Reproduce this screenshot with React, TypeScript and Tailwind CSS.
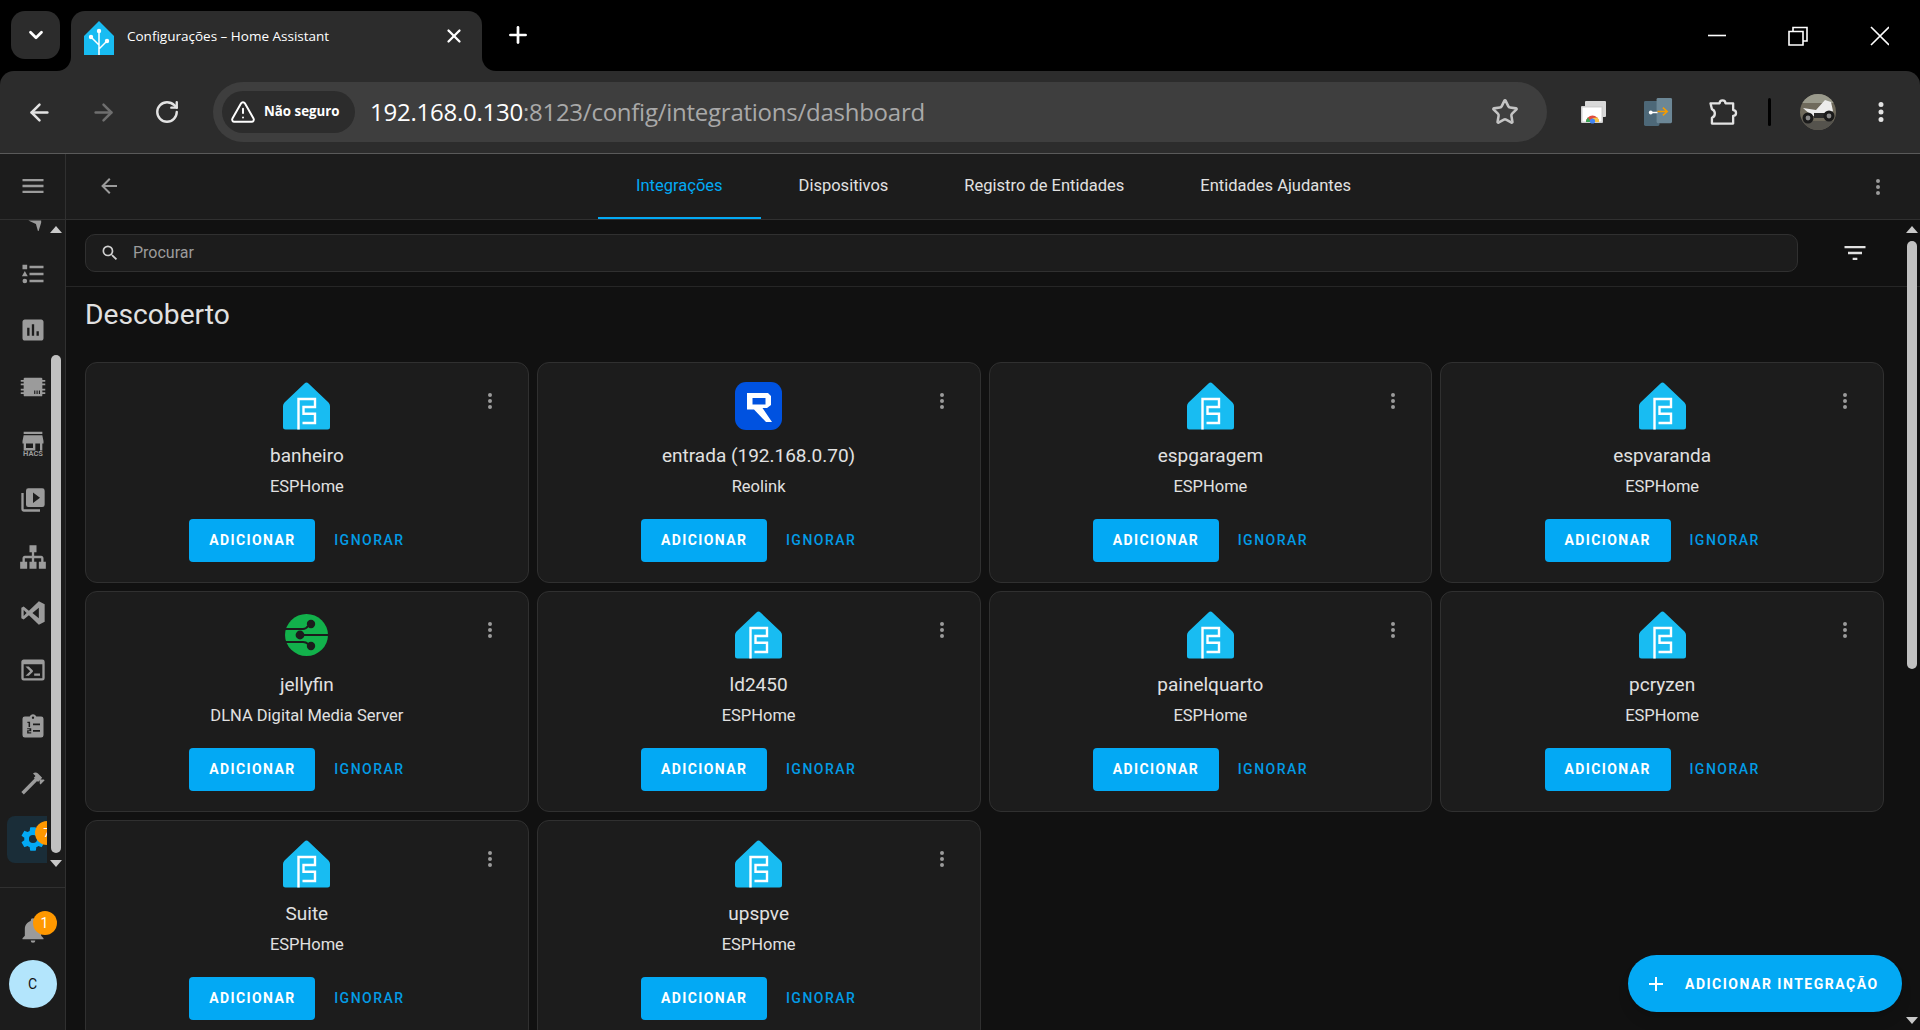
import { ArrowLeft, ArrowRight, RotateCw, Star, TriangleAlert, ChevronDown, X, Plus } from "lucide-react";

const mdi = {
  menu: "M3,6H21V8H3V6M3,11H21V13H3V11M3,16H21V18H3V16Z",
  dots: "M12,16A2,2 0 0,1 14,18A2,2 0 0,1 12,20A2,2 0 0,1 10,18A2,2 0 0,1 12,16M12,10A2,2 0 0,1 14,12A2,2 0 0,1 12,14A2,2 0 0,1 10,12A2,2 0 0,1 12,10M12,4A2,2 0 0,1 14,6A2,2 0 0,1 12,8A2,2 0 0,1 10,6A2,2 0 0,1 12,4Z",
  back: "M20,11V13H8L13.5,18.5L12.08,19.92L4.16,12L12.08,4.08L13.5,5.5L8,11H20Z",
  search:
    "M9.5,3A6.5,6.5 0 0,1 16,9.5C16,11.11 15.41,12.59 14.44,13.73L14.71,14H15.5L20.5,19L19,20.5L14,15.5V14.71L13.73,14.44C12.59,15.41 11.11,16 9.5,16A6.5,6.5 0 0,1 3,9.5A6.5,6.5 0 0,1 9.5,3M9.5,5C7,5 5,7 5,9.5C5,12 7,14 9.5,14C12,14 14,12 14,9.5C14,7 12,5 9.5,5Z",
  filter: "M6,13H18V11H6M3,6V8H21V6M10,18H14V16H10V18Z",
  plus: "M19,13H13V19H11V13H5V11H11V5H13V11H19V13Z",
  list: "M5,9.5L7.5,14H2.5L5,9.5M3,4H7V8H3V4M5,20A2,2 0 0,0 7,18A2,2 0 0,0 5,16A2,2 0 0,0 3,18A2,2 0 0,0 5,20M9,5V7H21V5H9M9,19H21V17H9V19M9,13H21V11H9V13Z",
  chart: "M9 17H7V10H9V17M13 17H11V7H13V17M17 17H15V13H17V17M19 3H5C3.9 3 3 3.9 3 5V19C3 20.1 3.9 21 5 21H19C20.1 21 21 20.1 21 19V5C21 3.9 20.1 3 19 3Z",
  chip: "M5 4H19A1 1 0 0 1 20 5V6H22.5V7.5H20V9H22.5V10.5H20V13.5H22.5V15H20V16.5H22.5V18H20V19A1 1 0 0 1 19 20H5A1 1 0 0 1 4 19V18H1.5V16.5H4V15H1.5V13.5H4V10.5H1.5V9H4V7.5H1.5V6H4V5A1 1 0 0 1 5 4M13 15V18H14V15H13M15 15V18H16V15H15M17 15V18H18V15H17Z",
  store: "M12,15.5H6V11.5H12M21,11.5V9.5L20,4.5H4L3,9.5V11.5H4V17.5H14V11.5H18V17.5H20V11.5M20,1.5H4V3.5H20V1.5Z",
  media: "M4 6H2V20A2 2 0 0 0 4 22H18V20H4V6M20 2H8A2 2 0 0 0 6 4V16A2 2 0 0 0 8 18H20A2 2 0 0 0 22 16V4A2 2 0 0 0 20 2M12 14.5V5.5L18 10L12 14.5Z",
  sitemap: "M9,2V8H11V11H5C3.89,11 3,11.89 3,13V16H1V22H7V16H5V13H11V16H9V22H15V16H13V13H19V16H17V22H23V16H21V13C21,11.89 20.11,11 19,11H13V8H15V2H9Z",
  vscode: "M17 2L22 4.5V19.5L17 22L8.5 14L4 17.5L2 16.5V7.5L4 6.5L8.5 10L17 2M17 7.5L11.5 12L17 16.5V7.5M4 9.5V14.5L6.5 12L4 9.5Z",
  console: "M20,19V7H4V19H20M20,3A2,2 0 0,1 22,5V19A2,2 0 0,1 20,21H4A2,2 0 0,1 2,19V5C2,3.89 2.9,3 4,3H20M13,17V15H18V17H13M9.58,13L5.57,9H8.4L11.7,12.3C12.09,12.69 12.09,13.33 11.7,13.72L8.42,17H5.59L9.58,13Z",
  clipboard:
    "M19,3H14.82C14.4,1.84 13.3,1 12,1C10.7,1 9.6,1.84 9.18,3H5A2,2 0 0,0 3,5V19A2,2 0 0,0 5,21H19A2,2 0 0,0 21,19V5A2,2 0 0,0 19,3M12,3A1,1 0 0,1 13,4A1,1 0 0,1 12,5A1,1 0 0,1 11,4A1,1 0 0,1 12,3M7.2 7.5V8.5H8.2V12H9.5V7.5H7.2M7 13V14H9V14.7H7V17.5H10.5V16.5H8.2V15.7H10.5V13H7M12 9V10.5H18V9H12M12 14.5V16H18V14.5H12Z",
  hammer: "M2 19.63L13.43 8.2L12.72 7.5L14.14 6.07L12 3.89C13.2 2.7 15.09 2.7 16.27 3.89L19.87 7.5L18.45 8.91H21.29L22 9.62L18.45 13.21L17.74 12.5V9.62L16.27 11.04L15.56 10.33L4.13 21.76L2 19.63Z",
  cog: "M12,15.5A3.5,3.5 0 0,1 8.5,12A3.5,3.5 0 0,1 12,8.5A3.5,3.5 0 0,1 15.5,12A3.5,3.5 0 0,1 12,15.5M19.43,12.97C19.47,12.65 19.5,12.33 19.5,12C19.5,11.67 19.47,11.34 19.43,11L21.54,9.37C21.73,9.22 21.78,8.95 21.66,8.73L19.66,5.27C19.54,5.05 19.27,4.96 19.05,5.05L16.56,6.05C16.04,5.66 15.5,5.32 14.87,5.07L14.5,2.42C14.46,2.18 14.25,2 14,2H10C9.75,2 9.54,2.18 9.5,2.42L9.13,5.07C8.5,5.32 7.96,5.66 7.44,6.05L4.95,5.05C4.73,4.96 4.46,5.05 4.34,5.27L2.34,8.73C2.21,8.95 2.27,9.22 2.46,9.37L4.57,11C4.53,11.34 4.5,11.67 4.5,12C4.5,12.33 4.53,12.65 4.57,12.97L2.46,14.63C2.27,14.78 2.21,15.05 2.34,15.27L4.34,18.73C4.46,18.95 4.73,19.03 4.95,18.95L7.44,17.94C7.96,18.34 8.5,18.68 9.13,18.93L9.5,21.58C9.54,21.82 9.75,22 10,22H14C14.25,22 14.46,21.82 14.5,21.58L14.87,18.93C15.5,18.67 16.04,18.34 16.56,17.94L19.05,18.95C19.27,19.03 19.54,18.95 19.66,18.73L21.66,15.27C21.78,15.05 21.73,14.78 21.54,14.63L19.43,12.97Z",
  bell: "M21,19V20H3V19L5,17V11C5,7.9 7.03,5.17 10,4.29C10,4.19 10,4.1 10,4A2,2 0 0,1 12,2A2,2 0 0,1 14,4C14,4.1 14,4.19 14,4.29C16.97,5.17 19,7.9 19,11V17L21,19M14,21A2,2 0 0,1 12,23A2,2 0 0,1 10,21",
};

const Icon = ({ d, className }: { d: string; className: string }) => (
  <svg viewBox="0 0 24 24" className={className} fill="currentColor">
    <path d={d} fillRule="evenodd" />
  </svg>
);

const HaLogo = () => (
  <svg viewBox="0 0 30 36" className="w-[30px] h-[36px]">
    <path d="M15 0L30 15V34H0V15Z" fill="#18bcf2" />
    <g stroke="#fff" strokeWidth="1.5" fill="none">
      <path d="M15 11V34M15 24L8 17M15 28L22 21" />
    </g>
    <circle cx="15" cy="10" r="2.2" fill="#fff" />
    <circle cx="7" cy="16" r="2.2" fill="#fff" />
    <circle cx="23" cy="20" r="2.2" fill="#fff" />
  </svg>
);

const EspHomeLogo = () => (
  <svg viewBox="0 0 47 48" className="w-[47px] h-[48px]">
    <path d="M23.5 0.5Q24.5 0.5 25.5 1.5L45.5 20.5Q47 22 47 24V45Q47 47.5 44.5 47.5H2.5Q0 47.5 0 45V24Q0 22 1.5 20.5L21.5 1.5Q22.5 0.5 23.5 0.5Z" fill="#18bcf2" />
    <path d="M15.5 47.5V17H32V25H20.5V31.7H32V41H19.5" stroke="#fff" strokeWidth="2.4" fill="none" />
  </svg>
);

const ReolinkLogo = () => (
  <svg viewBox="0 0 47 48" className="w-[47px] h-[48px]">
    <rect width="47" height="48" rx="11" fill="#0052e0" />
    <path
      d="M12 11H33L36 14V23L32 26H27.5L37 40H31L19 27.5H12V11ZM17.5 16V22.5H30.5V16H17.5Z"
      fill="#fff"
      fillRule="evenodd"
    />
  </svg>
);

const DlnaLogo = () => (
  <svg viewBox="0 0 43 42" className="w-[43px] h-[42px] mt-[3px]">
    <ellipse cx="21.5" cy="21" rx="21.5" ry="21" fill="#12b14b" />
    <g stroke="#1c1c1c" strokeWidth="2" fill="none">
      <path d="M0 15H18Q21 15 23 12" />
      <path d="M17 21H43" />
      <path d="M0 28H18Q21 28 23 30" />
    </g>
    <circle cx="26" cy="10" r="4.2" fill="#1c1c1c" />
    <circle cx="15" cy="21" r="4.4" fill="#1c1c1c" />
    <circle cx="26" cy="32" r="4.2" fill="#1c1c1c" />
  </svg>
);

type Kind = "esp" | "reolink" | "dlna";

const cards: { title: string; sub: string; kind: Kind }[] = [
  { title: "banheiro", sub: "ESPHome", kind: "esp" },
  { title: "entrada (192.168.0.70)", sub: "Reolink", kind: "reolink" },
  { title: "espgaragem", sub: "ESPHome", kind: "esp" },
  { title: "espvaranda", sub: "ESPHome", kind: "esp" },
  { title: "jellyfin", sub: "DLNA Digital Media Server", kind: "dlna" },
  { title: "ld2450", sub: "ESPHome", kind: "esp" },
  { title: "painelquarto", sub: "ESPHome", kind: "esp" },
  { title: "pcryzen", sub: "ESPHome", kind: "esp" },
  { title: "Suite", sub: "ESPHome", kind: "esp" },
  { title: "upspve", sub: "ESPHome", kind: "esp" },
];

const Card = ({ title, sub, kind }: { title: string; sub: string; kind: Kind }) => (
  <div className="relative h-[221px] flex flex-col items-center pt-[19px] rounded-[12px] border border-[#303030] bg-[#1c1c1c]">
    <div className="h-[48px] flex justify-center">
      {kind === "esp" && <EspHomeLogo />}
      {kind === "reolink" && <ReolinkLogo />}
      {kind === "dlna" && <DlnaLogo />}
    </div>
    <div className="mt-[14px] text-[19px] leading-[24px] text-[#e1e1e1]">{title}</div>
    <div className="mt-[7px] text-[16.5px] leading-[24px] text-[#e1e1e1]">{sub}</div>
    <div className="mt-[20px] mr-[2px] flex items-center gap-[1px]">
      <button className="h-[43px] w-[126px] rounded-[4px] bg-[#03a9f4] text-white text-[14px] font-bold tracking-[1.4px]" type="button">
        ADICIONAR
      </button>
      <button className="h-[43px] w-[106px] text-[#039be5] text-[14px] font-medium tracking-[1.5px]" type="button">
        IGNORAR
      </button>
    </div>
    <Icon d={mdi.dots} className="absolute right-[26px] top-[26px] size-6 text-[#9b9b9b]" />
  </div>
);

const sideItems = [mdi.list, mdi.chart, mdi.chip, "hacs", mdi.media, mdi.sitemap, mdi.vscode, mdi.console, mdi.clipboard, mdi.hammer];

const ScrollArrow = ({ down, className }: { down?: boolean; className: string }) => (
  <svg viewBox="0 0 12 7" className={`absolute w-[12px] h-[7px] ${className}`}>
    <path d={down ? "M0 0H12L6 7Z" : "M6 0L12 7H0Z"} fill="#c9c9c9" />
  </svg>
);

const Sidebar = () => (
  <div className="relative w-[66px] shrink-0 flex flex-col border-r border-[#303030] bg-[#1c1c1c]">
    <div className="h-[66px] shrink-0 flex items-center justify-center pb-[2px] border-b border-[#303030] text-[#9b9b9b]">
      <Icon d={mdi.menu} className="size-7" />
    </div>
    <div className="h-[667px] overflow-hidden">
      <div className="-mt-[31px] flex flex-col">
        <div className="h-[56.6px] flex items-center pl-[19px]">
          <svg viewBox="0 0 24 24" className="size-7 text-[#9b9b9b]" fill="currentColor">
            <path d="M8 15H19V17L16.5 25L14.5 18Z" />
          </svg>
        </div>
        {sideItems.map((d, i) => (
          <div key={i} className="h-[56.6px] flex items-center pl-[19px] text-[#9b9b9b]">
            {d === "hacs" ? (
              <div className="relative size-7">
                <Icon d={mdi.store} className="size-7" />
                <span className="absolute left-0 right-0 top-[20px] text-center text-[7.5px] leading-[8px] font-bold">HACS</span>
              </div>
            ) : (
              <Icon d={d} className="size-7" />
            )}
          </div>
        ))}
        <div className="h-[47px] ml-[7px] w-[40px] mt-[4px] relative overflow-hidden rounded-l-[8px] bg-[#1a2d38] flex items-center pl-[12px]">
          <Icon d={mdi.cog} className="size-7 text-[#03a9f4] shrink-0" />
          <span className="absolute left-[28px] top-[5px] size-[24px] rounded-full bg-[#ff9800] text-white text-[13px] leading-[24px] text-center">7</span>
        </div>
      </div>
    </div>
    <div className="h-[143px] border-t border-[#303030] flex flex-col items-center">
      <div className="relative mt-[28px] size-7 text-[#9b9b9b]">
        <Icon d={mdi.bell} className="size-7" />
        <span className="absolute left-[14px] -top-[5px] size-[24px] rounded-full bg-[#ff9800] text-white text-[14px] leading-[24px] text-center">1</span>
      </div>
      <div className="mt-[16px] size-[48px] rounded-full bg-[#b3e5fc] text-[#111] text-[14px] flex items-center justify-center">C</div>
    </div>
    <ScrollArrow className="left-[50px] top-[72px]" />
    <div className="absolute left-[51px] top-[201px] w-[10px] h-[498px] rounded-full bg-[#c1c1c1]" />
    <ScrollArrow down className="left-[50px] top-[706px]" />
  </div>
);

const TabStrip = () => (
  <div className="h-[71px] shrink-0 bg-black flex items-start pt-[11px] pl-[11px] text-white">
    <div className="w-[49px] h-[48px] rounded-[14px] bg-[#2c2c2c] flex items-center justify-center">
      <ChevronDown className="size-[22px]" strokeWidth={3} />
    </div>
    <div className="relative ml-[11px] w-[411px] h-[60px] rounded-t-[14px] bg-[#2c2c2c] flex items-start pt-[10px] pl-[13px]">
      <HaLogo />
      <span className="ml-[13px] mt-[5px] text-[13.5px] leading-[20px] font-['Open_Sans',sans-serif]">Configurações – Home Assistant</span>
      <X className="absolute right-[17px] top-[14px] size-[22px]" strokeWidth={2.5} />
      <div className="absolute -left-[14px] bottom-0 size-[14px] bg-[#2c2c2c]">
        <div className="size-full rounded-br-[14px] bg-black" />
      </div>
      <div className="absolute -right-[14px] bottom-0 size-[14px] bg-[#2c2c2c]">
        <div className="size-full rounded-bl-[14px] bg-black" />
      </div>
    </div>
    <Plus className="ml-[23px] mt-[11px] size-[26px]" strokeWidth={2.5} />
    <div className="flex-1" />
    <svg viewBox="0 0 181 20" className="w-[181px] h-[20px] mt-[15px] mr-[31px]" fill="none" stroke="#fff" strokeWidth="1.6">
      <path d="M0 9.5H18" />
      <path d="M81 5.5H95V19H81ZM85 5V1.5H99V15H95" />
      <path d="M163 1L181 19M181 1L163 19" />
    </svg>
  </div>
);

const CastIcon = () => (
  <svg viewBox="0 0 26 24" className="w-[26px] h-[24px]">
    <rect x="5" y="1" width="21" height="16" rx="1" fill="#d8d8d8" />
    <rect x="1" y="6" width="22" height="17" rx="1" fill="#cfcfcf" />
    <rect x="2.5" y="7.5" width="19" height="14" fill="#fff" />
    <path d="M6 22A6.5 6.5 0 0 1 19 22Z" fill="#e04a3c" />
    <path d="M12.5 22H19A6.5 6.5 0 0 0 17.5 17.5L12.5 18Z" fill="#f6c344" />
    <path d="M6 22A6.5 6.5 0 0 1 8 17.5L11 22Z" fill="#3aa757" />
    <circle cx="12.5" cy="21" r="2.6" fill="#4285f4" />
  </svg>
);

const SwapIcon = () => (
  <svg viewBox="0 0 30 30" className="w-[29px] h-[29px]">
    <rect x="0" y="3" width="16" height="26" rx="1.5" fill="#4d6878" />
    <rect x="13" y="0" width="16" height="26" rx="1.5" fill="#6c8796" />
    <path d="M7 15H14" stroke="#fff" strokeWidth="1.5" />
    <circle cx="7" cy="15" r="2" fill="#fff" />
    <path d="M14 14H23M19.5 10L24 14L19.5 18" stroke="#f59c00" strokeWidth="1.6" fill="none" />
  </svg>
);

const PuzzleIcon = () => (
  <svg viewBox="0 0 30 28" className="w-[29px] h-[27px]" fill="none" stroke="#e3e3e3" strokeWidth="2.4" strokeLinejoin="round">
    <path d="M1.5 4.5H11A3 3 0 0 1 17 4.5H25V11.5A3 3 0 0 1 25 17.5V25.5H3V19.5A5 5 0 0 0 6 14.5A5 5 0 0 0 3 10.5Z" />
  </svg>
);

const Avatar = () => (
  <svg viewBox="0 0 36 36" className="size-[36px]">
    <clipPath id="avatar-clip">
      <circle cx="18" cy="18" r="18" />
    </clipPath>
    <g clipPath="url(#avatar-clip)">
      <rect width="36" height="36" fill="#6f6a5c" />
      <rect width="36" height="9" fill="#9a9a8c" />
      <rect y="27" width="36" height="9" fill="#55534d" />
      <path d="M3 14L16 16L25 6L31 8L33 17L27 22L12 22Z" fill="#ececec" />
      <path d="M14 19H26V24H14Z" fill="#2a2a2a" />
      <circle cx="8" cy="24" r="5.5" fill="#1a1a1a" />
      <circle cx="8" cy="24" r="2.4" fill="#8a8a8a" />
      <circle cx="29" cy="22" r="5.5" fill="#1a1a1a" />
      <circle cx="29" cy="22" r="2.4" fill="#8a8a8a" />
    </g>
  </svg>
);

const Toolbar = () => (
  <div className="h-[83px] shrink-0 bg-black">
    <div className="h-full rounded-t-[14px] bg-[#2c2c2c] border-b border-[#5a5a5a] flex items-center pl-[26px] pr-[22px]">
      <ArrowLeft className="size-[27px] text-[#e3e3e3]" strokeWidth={2.2} />
      <ArrowRight className="ml-[37px] size-[27px] text-[#6f6f6f]" strokeWidth={2.2} />
      <RotateCw className="ml-[37px] size-[26px] text-[#e3e3e3]" strokeWidth={2.2} />
      <div className="ml-[33px] w-[1334px] h-[60px] rounded-full bg-[#3e3e3e] flex items-center pl-[9px]">
        <div className="w-[133px] h-[42px] rounded-full bg-[#2c2c2c] flex items-center pl-[8px] text-white">
          <TriangleAlert className="size-[26px]" strokeWidth={1.8} />
          <span className="ml-[8px] text-[13.3px] font-bold font-['Open_Sans',sans-serif]">Não seguro</span>
        </div>
        <div className="ml-[15px] text-[24px] tracking-[-0.25px] leading-[30px] font-['Open_Sans',sans-serif]">
          <span className="text-white">192.168.0.130</span>
          <span className="text-[#a9a9a9]">:8123/config/integrations/dashboard</span>
        </div>
        <div className="flex-1" />
        <Star className="mr-[28px] size-[28px] text-[#c4c4c4]" strokeWidth={2.2} />
      </div>
      <div className="ml-[33px]"><CastIcon /></div>
      <div className="ml-[38px]"><SwapIcon /></div>
      <div className="ml-[36px]"><PuzzleIcon /></div>
      <div className="ml-[30px] w-[3px] h-[28px] rounded-full bg-black" />
      <div className="ml-[29px]"><Avatar /></div>
      <Icon d={mdi.dots} className="ml-[30px] size-[30px] text-[#e3e3e3]" />
    </div>
  </div>
);

const tabs = ["Integrações", "Dispositivos", "Registro de Entidades", "Entidades Ajudantes"];

const Content = () => (
  <div className="relative flex-1 min-w-0 flex flex-col bg-[#111111] overflow-hidden">
    <div className="h-[66px] shrink-0 flex items-center bg-[#1c1c1c] border-b border-[#303030] text-[#9b9b9b]">
      <Icon d={mdi.back} className="ml-[31px] mb-[2px] size-[24px]" />
      <div className="ml-[477px] self-stretch flex">
        {tabs.map((t, i) => (
          <div
            key={t}
            className={`px-[38px] pt-[2px] flex items-center text-[16.5px] ${
              i === 0 ? "text-[#03a9f4] border-b-2 border-[#03a9f4]" : "text-[#e1e1e1] border-b-2 border-transparent"
            }`}
          >
            {t}
          </div>
        ))}
      </div>
      <div className="flex-1" />
      <Icon d={mdi.dots} className="mr-[30px] size-6" />
    </div>
    <div className="h-[67px] shrink-0 flex items-center pl-[19px] pr-[8px] border-b border-[#262626]">
      <div className="flex-1 h-[38px] rounded-[10px] border border-[#303030] bg-[#1c1c1c] flex items-center pl-[14px] text-[#9b9b9b]">
        <Icon d={mdi.search} className="size-[20px] text-[#d0d0d0]" />
        <span className="ml-[13px] text-[16px]">Procurar</span>
      </div>
      <div className="w-[114px] flex justify-center">
        <Icon d={mdi.filter} className="size-[28px] text-[#e1e1e1]" />
      </div>
    </div>
    <h1 className="mt-[8px] mb-[27px] pl-[19px] text-[28.2px] leading-[40px] text-[#e1e1e1]">Descoberto</h1>
    <div className="pl-[19px] pr-[36px] grid grid-cols-4 gap-[8px]">
      {cards.map((c) => (
        <Card key={c.title} {...c} />
      ))}
    </div>
    <div className="absolute left-[1562px] top-[801px] w-[274px] h-[57px] rounded-full bg-[#03a9f4] flex items-center shadow-lg text-white">
      <Icon d={mdi.plus} className="ml-[16px] size-6" />
      <span className="ml-[17px] pt-[1px] text-[14px] font-bold tracking-[1.5px] whitespace-nowrap">ADICIONAR INTEGRAÇÃO</span>
    </div>
    <ScrollArrow className="left-[1840px] top-[72px]" />
    <div className="absolute left-[1841px] top-[87px] w-[10px] h-[428px] rounded-full bg-[#c1c1c1]" />
    <ScrollArrow down className="left-[1840px] top-[863px]" />
  </div>
);

export default function App() {
  return (
    <div className="w-[1920px] h-[1030px] overflow-hidden flex flex-col bg-black font-['Roboto',sans-serif]">
      <TabStrip />
      <Toolbar />
      <div className="flex-1 min-h-0 flex">
        <Sidebar />
        <Content />
      </div>
    </div>
  );
}
